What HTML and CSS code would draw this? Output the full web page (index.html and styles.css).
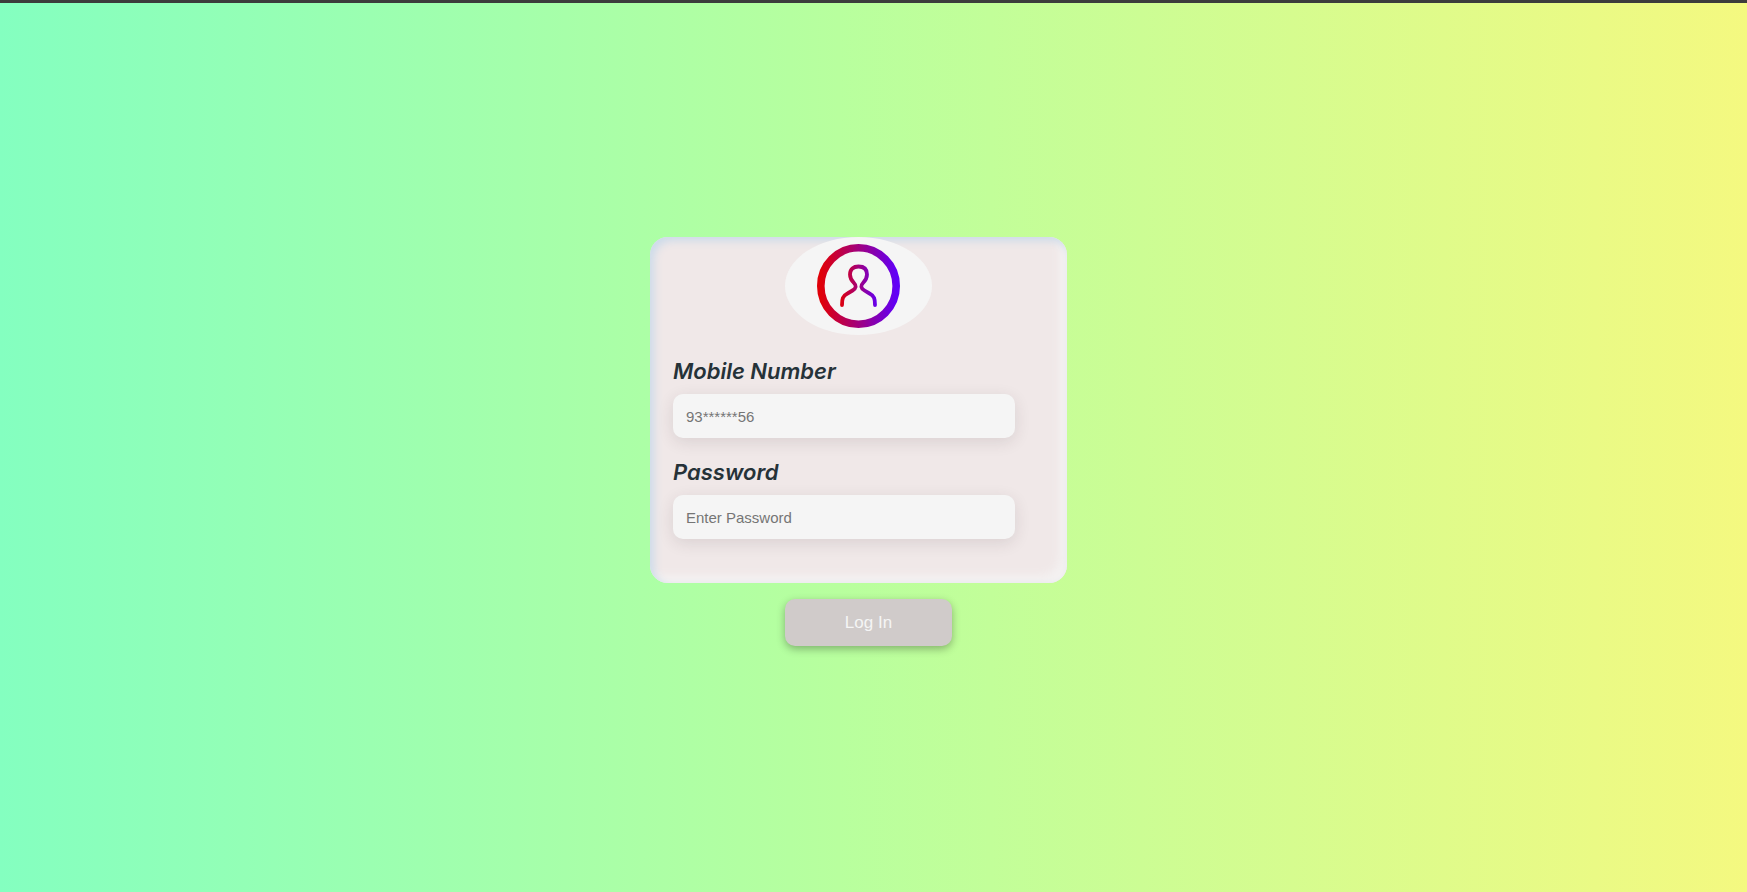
FILE: index.html
```html
<!DOCTYPE html>
<html lang="en">
<head>
<meta charset="utf-8">
<title>Log In</title>
<link rel="stylesheet" href="styles.css">
</head>
<body>
<form class="login">
  <div class="card">
    <div class="avatar">
      <svg class="avatar-icon" viewBox="0 0 84 84" fill="none" stroke="url(#tint)" aria-hidden="true">
        <defs>
          <linearGradient id="tint" gradientUnits="userSpaceOnUse" x1="0" y1="0" x2="84" y2="0">
            <stop offset="0.05" stop-color="#e00008"/>
            <stop offset="0.95" stop-color="#6000f8"/>
          </linearGradient>
          <linearGradient id="figure" gradientUnits="userSpaceOnUse" x1="23" y1="0" x2="61" y2="0">
            <stop offset="0" stop-color="#e00008"/>
            <stop offset="1" stop-color="#6000f8"/>
          </linearGradient>
        </defs>
        <ellipse cx="41.500" cy="42" rx="37.700" ry="38.200" stroke-width="7.600"/>
        <path stroke="url(#figure)" stroke-width="3.800" stroke-linecap="round" d="M25 61C25 55 25.500 52 30.500 49.500L35.500 46.500C39.500 44 39.500 41.500 37 39C34.500 36.500 33 34 33 30.500C33 25 36.500 22.500 41.500 22.500S50 25 50 30.500C50 34 48.500 36.500 46 39C43.500 41.500 43.500 44 47.500 46.500L52.500 49.500C57.500 52 58 55 58 61"/>
      </svg>
    </div>
    <div class="field">
      <label class="field-label" for="mobile">Mobile Number</label>
      <input class="field-input" id="mobile" type="tel" placeholder="93******56">
    </div>
    <div class="field">
      <label class="field-label" for="password">Password</label>
      <input class="field-input" id="password" type="password" placeholder="Enter Password">
    </div>
  </div>
  <button class="submit" type="submit">Log In</button>
</form>
</body>
</html>
```
FILE: styles.css
```css
* {
  box-sizing: border-box;
}

body {
  margin: 0;
  min-height: 100vh;
  display: flex;
  justify-content: center;
  align-items: center;
  border-top: 3px solid #3c3c3c;
  background: linear-gradient(90deg, #84ffc0 0%, #b8ff9e 48%, #f4f980 100%);
  font-family: "Liberation Sans", Arial, sans-serif;
}

.login {
  display: flex;
  flex-direction: column;
  align-items: center;
  gap: 16px;
  margin: 0 30px 12px 0;
}

.card {
  width: 417px;
  max-width: 100%;
  padding: 0 52px 44px 23px;
  border-radius: 18px;
  background: #f0e8e8;
  box-shadow: inset 4px 4px 8px #ccdbea, inset -8px -8px 8px #f4f1f1;
}

.avatar {
  display: flex;
  justify-content: center;
  align-items: center;
  width: 147px;
  height: 98px;
  margin-left: 112px;
  border-radius: 50%;
  background: #f5f5f5;
}

.avatar-icon {
  width: 84px;
  height: 84px;
}

.field {
  display: flex;
  flex-direction: column;
  gap: 9px;
  padding-top: 20px;
}

.avatar + .field {
  padding-top: 22px;
}

.field-label {
  color: #263238;
  font-family: Inter, "Liberation Sans", sans-serif;
  font-size: 22px;
  font-style: italic;
  font-weight: 600;
  line-height: 28px;
}

.field-input {
  width: 100%;
  height: 44px;
  padding: 0 13px;
  border: 0;
  border-radius: 10px;
  background: #f5f5f5;
  box-shadow: 0 4px 16px rgba(60, 40, 50, 0.12);
  color: #263238;
  font: 15px "Liberation Sans", Arial, sans-serif;
}

.field-input::placeholder {
  color: #757575;
}

.submit {
  width: 167px;
  height: 47px;
  margin-left: 20px;
  border: 0;
  border-radius: 10px;
  background: #d0cbca;
  box-shadow: 0 3px 8px rgba(0, 0, 0, 0.3);
  color: #f5f5f5;
  font: 17px "Liberation Sans", Arial, sans-serif;
}
```
